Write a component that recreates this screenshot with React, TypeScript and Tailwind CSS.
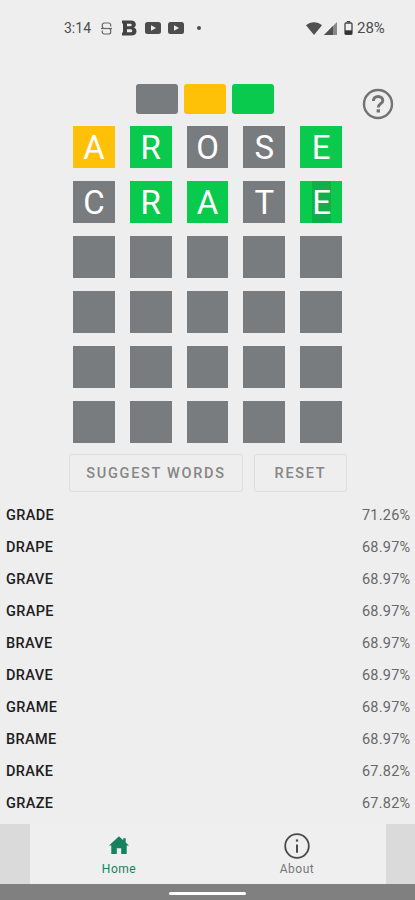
import clsx from "clsx";

type Mark = "absent" | "present" | "correct";

interface Cell {
  letter: string;
  mark: Mark;
  focused?: boolean;
}

const markColors: Record<Mark, string> = {
  absent: "bg-[#787c7f]",
  present: "bg-[#ffc107]",
  correct: "bg-[#0aca4e]",
};

const guesses: Cell[][] = [
  [
    { letter: "A", mark: "present" },
    { letter: "R", mark: "correct" },
    { letter: "O", mark: "absent" },
    { letter: "S", mark: "absent" },
    { letter: "E", mark: "correct" },
  ],
  [
    { letter: "C", mark: "absent" },
    { letter: "R", mark: "correct" },
    { letter: "A", mark: "correct" },
    { letter: "T", mark: "absent" },
    { letter: "E", mark: "correct", focused: true },
  ],
];

const emptyRow: Cell[] = Array.from({ length: 5 }, () => ({ letter: "", mark: "absent" as Mark }));
const board = [...guesses, emptyRow, emptyRow, emptyRow, emptyRow];

const suggestions = [
  { word: "GRADE", score: "71.26%" },
  { word: "DRAPE", score: "68.97%" },
  { word: "GRAVE", score: "68.97%" },
  { word: "GRAPE", score: "68.97%" },
  { word: "BRAVE", score: "68.97%" },
  { word: "DRAVE", score: "68.97%" },
  { word: "GRAME", score: "68.97%" },
  { word: "BRAME", score: "68.97%" },
  { word: "DRAKE", score: "67.82%" },
  { word: "GRAZE", score: "67.82%" },
];

function VideoIcon() {
  return (
    <svg width="16" height="12" viewBox="0 0 16 12">
      <rect width="16" height="12" rx="2.5" fill="#4d4d4d" />
      <path d="M6 3.2v5.6L11 6z" fill="#eee" />
    </svg>
  );
}

function StatusBar() {
  return (
    <div className="flex h-14 items-center pl-16 pr-[29px] text-[#4d4d4d]">
      <span className="w-[27px] text-[14px]">3:14</span>
      <svg className="ml-[10px]" width="11" height="13" viewBox="0 0 11 13" fill="none" stroke="#666" strokeWidth="1.2">
        <path d="M9.7 4.5V3a2 2 0 0 0-2-2H3.3a2 2 0 0 0-2 2v1.5a2 2 0 0 0 2 2h4.4a2 2 0 0 1 2 2V10a2 2 0 0 1-2 2H3.3a2 2 0 0 1-2-2V8.5" />
        <path d="M0 6.5h11" />
      </svg>
      <svg className="ml-[10px]" width="15" height="16" viewBox="0 0 15 16" fill="#444">
        <path
          fillRule="evenodd"
          d="M0 .5h9c3 0 4.800 1.400 4.800 3.900 0 1.700-.8 2.700-2.200 3.200 1.900.5 2.900 1.900 2.900 3.700 0 2.800-2 4.200-5.200 4.200H0v-2.900h1V3.400H0zM5 3.700v2.500h3c1.100 0 1.700-.4 1.700-1.200S9.100 3.700 8 3.700zM5 9.300v3h3.300c1.200 0 1.900-.5 1.900-1.500s-.7-1.500-1.900-1.500z"
        />
      </svg>
      <div className="ml-[8px] flex gap-[7px]">
        <VideoIcon />
        <VideoIcon />
      </div>
      <span className="ml-[13px] size-1 rounded-full bg-[#4d4d4d]" />
      <div className="ml-auto flex items-center">
        <svg width="16" height="13" viewBox="0 0 16 13" fill="#505050">
          <path d="M0 3.2C4.6-.9 11.4-.9 16 3.2L8 13z" />
        </svg>
        <svg className="ml-[2px]" width="13" height="13" viewBox="0 0 13 13">
          <path d="M0 13 13 0v13z" fill="#888" />
          <path d="M0 13 9 4v9z" fill="#505050" />
        </svg>
        <svg className="ml-[7px]" width="9" height="14" viewBox="0 0 9 14">
          <path d="M2.8 0h3.4v1.5H2.8z" fill="#444" />
          <rect x="1" y="2" width="7" height="11.3" rx="1" fill="none" stroke="#444" strokeWidth="1.3" />
          <path d="M1 9.3h7v4H1z" fill="#333" />
        </svg>
        <span className="ml-[4px] w-[29px] pt-px text-[15px]">28%</span>
      </div>
    </div>
  );
}

function Tile({ cell }: { cell: Cell }) {
  return (
    <div
      className={clsx(
        "flex h-[42px] items-center justify-center text-[33px] leading-[44px] text-white",
        markColors[cell.mark],
      )}
    >
      {cell.focused ? (
        <span className="ml-px h-[42px] bg-[#12ae4b]">{cell.letter}</span>
      ) : (
        <span className="h-[42px]">{cell.letter}</span>
      )}
    </div>
  );
}

export default function App() {
  return (
    <div className="flex h-[900px] w-[415px] flex-col overflow-hidden bg-[#eeeeee] font-[Roboto,sans-serif]">
      <StatusBar />

      {/* Color legend and help */}
      <div className="mt-7 flex h-[30px] pl-[136px]">
        <div className="flex gap-[6px]">
          <div className={clsx("w-[42px] rounded-[3px]", markColors.absent)} />
          <div className={clsx("w-[42px] rounded-[3px]", markColors.present)} />
          <div className={clsx("w-[42px] rounded-[3px]", markColors.correct)} />
        </div>
        <svg className="ml-[88px] mt-[4px] shrink-0" width="32" height="32" viewBox="0 0 32 32" fill="none" stroke="#737373">
          <circle cx="16" cy="16" r="14" strokeWidth="2.4" />
          <path d="M11.4 12.900c0-2.700 1.900-4.500 4.700-4.500s4.700 1.700 4.700 4.100c0 3.100-4.500 3.300-4.500 6.900" strokeWidth="3" />
          <path d="M16.300 21.300v3.200" strokeWidth="3.400" />
        </svg>
      </div>

      {/* Board */}
      <div className="ml-[73px] mt-[11.5px] flex w-[269px] flex-col gap-[13px]">
        {board.map((row, i) => (
          <div key={i} className="grid grid-cols-5 gap-[15px]">
            {row.map((cell, j) => (
              <Tile key={j} cell={cell} />
            ))}
          </div>
        ))}
      </div>

      {/* Actions */}
      <div className="ml-[69px] mt-[11.5px] flex h-[38px] shrink-0 gap-[11px] text-[14.5px] font-medium text-[#868686]">
        <button className="w-[174px] whitespace-nowrap rounded-[3px] border border-[#dedede] pt-[2px] tracking-[1.7px]">SUGGEST WORDS</button>
        <button className="w-[93px] rounded-[3px] border border-[#dedede] pt-[2px] tracking-[1.7px]">RESET</button>
      </div>

      {/* Suggestions */}
      <ul className="mt-[8px] flex flex-col pl-[6px] pr-[4.5px]">
        {suggestions.map(({ word, score }) => (
          <li key={word} className="flex h-8 items-center justify-between text-[14.5px]">
            <span className="font-medium tracking-[0.35px] text-[#202020]">{word}</span>
            <span className="tracking-[0.25px] text-[#686868]">{score}</span>
          </li>
        ))}
      </ul>

      {/* Bottom navigation */}
      <nav className="mt-auto flex h-[59.5px] shrink-0 bg-[#dadada] pl-[30px] pr-[29px] text-[12px] tracking-[0.5px]">
        <div className="flex flex-1 flex-col items-center bg-[#efefef] pt-[12px] text-[#16805f]">
          <svg width="20" height="19" viewBox="0 0 20 19" fill="currentColor">
            <path d="M10 .3 0 9.500h2.300V18h5.500v-5.800h4.400V18h5.500V9.500H20L16.700 6.400V2.200h-2.500v2z" />
          </svg>
          <span className="mt-[5.5px] leading-4">Home</span>
        </div>
        <div className="flex flex-1 flex-col items-center bg-[#efefef] pt-[9px] text-[#777]">
          <svg width="26" height="26" viewBox="0 0 26 26" fill="none" stroke="#4a4a4a">
            <circle cx="13" cy="13" r="11.8" strokeWidth="1.8" />
            <path d="M13 11.5v8.3" strokeWidth="2" />
            <path d="M13 6.4v2.2" strokeWidth="2.2" />
          </svg>
          <span className="mt-[1.5px] leading-4">About</span>
        </div>
      </nav>
      <div className="flex h-[16.5px] shrink-0 justify-center bg-[#808080] pt-[8px]">
        <div className="h-[3px] w-[77px] rounded-full bg-white" />
      </div>
    </div>
  );
}
